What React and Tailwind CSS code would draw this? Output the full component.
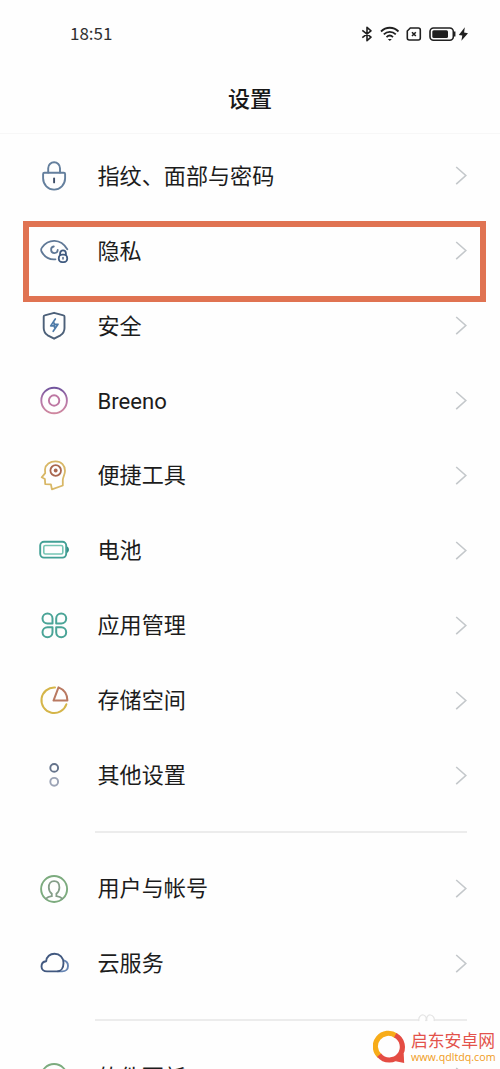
import React from 'react';

function LockIcon() {
  return (
    <svg className="w-8 h-8" viewBox="0 0 32 32" fill="none" stroke="#647f9d" strokeWidth="1.9" strokeLinecap="round">
      <path d="M10.2 12.5V8.2a5.9 5.9 0 0 1 11.8 0v4.3" />
      <path d="M6.4 12.8h19.4a1.3 1.3 0 0 1 1.3 1.3v4.2a11 11.3 0 0 1-22 0v-4.2a1.3 1.3 0 0 1 1.3-1.3z" />
      <path d="M16.1 18.4v4" stroke="#3c4c66" />
    </svg>
  );
}

function EyeIcon() {
  return (
    <svg className="w-8 h-8" viewBox="0 0 32 32" fill="none" stroke="#5f7896" strokeWidth="1.8" strokeLinecap="round">
      <path d="M17.5 24.3C10 25 5.4 20 3.5 16.5 2.9 15 2.9 13.9 4 12.5 10.5 3.7 22.5 3.2 29.3 14.2" />
      <path d="M15.800 11.500a3.300 3.300 0 1 0 3.900 3.500" />
      <path d="M22.100 20v-1.700a2.900 2.900 0 0 1 5.800 0V20" stroke="#405b80" />
      <rect x="20.8" y="19.6" width="8.4" height="7.6" rx="3.3" stroke="#405b80" />
      <path d="M25 22.5v1.5" stroke="#405b80" strokeWidth="1.4" />
    </svg>
  );
}

function ShieldIcon() {
  return (
    <svg className="w-8 h-8" viewBox="0 0 32 32" fill="none" strokeWidth="1.9" strokeLinejoin="round" strokeLinecap="round">
      <path d="M16.1 2.800 25.500 5.300a1.300 1.300 0 0 1 1 1.300v11.500c0 3.500-1.400 5.500-4 7.200l-6.400 3.400-6.400-3.400c-2.600-1.700-4-3.700-4-7.200V6.600a1.300 1.300 0 0 1 1-1.300z" stroke="#4c6079" />
      <path d="M17.3 9 12.700 15.900h3.500V13.200M15.200 21.300l4.800-7h-3.500v3" stroke="#4d7aa8" strokeWidth="1.7" />
    </svg>
  );
}

function BreenoIcon() {
  return (
    <svg className="w-8 h-8" viewBox="0 0 32 32" fill="none" strokeWidth="1.9">
      <defs>
        <linearGradient id="breeno" x1="0" y1="0" x2="0" y2="1">
          <stop offset="0" stopColor="#71549d" />
          <stop offset="0.5" stopColor="#b477a9" />
          <stop offset="1" stopColor="#cf879f" />
        </linearGradient>
      </defs>
      <circle cx="16.1" cy="15.5" r="12.8" stroke="url(#breeno)" />
      <circle cx="16.1" cy="15.5" r="5.2" stroke="#bd76a2" />
    </svg>
  );
}

function HeadIcon() {
  return (
    <svg className="w-8 h-8 -mt-px" viewBox="0 0 32 32" fill="none" strokeWidth="1.8" strokeLinejoin="round">
      <path d="M7 9.500C7.500 4.500 12 1.400 17.500 1.400c6 0 9.500 4.100 9.500 9.300 0 4.300-2.200 6.300-2.200 9.300v5.500L13.900 29.300 12.900 24.400l-5.700-.3-.3-5.100-3.200-1.700L7.200 13.200z" stroke="#d8b766" />
      <circle cx="17.7" cy="10.5" r="5.3" stroke="#a9674f" />
      <circle cx="17.7" cy="10.5" r="1.9" fill="#a9674f" />
    </svg>
  );
}

function BatteryIcon() {
  return (
    <svg className="w-8 h-8 -mt-px" viewBox="0 0 32 32" fill="none">
      <rect x="2.2" y="7.8" width="26" height="15.8" rx="3.8" stroke="#42a095" strokeWidth="1.9" />
      <rect x="5.8" y="11.5" width="19" height="8.5" rx="1.6" stroke="#76c5b4" strokeWidth="1.6" />
      <path d="M29 12.600c2.600 1 2.600 5.300 0 6.300z" fill="#348e85" />
    </svg>
  );
}

function AppsIcon() {
  return (
    <svg className="w-8 h-8 -mt-[2px]" viewBox="0 0 32 32" fill="none" stroke="#4aa497" strokeWidth="2" strokeLinejoin="round">
      <path d="M14.500 14.500H9.500a5 5 0 1 1 5-5z" />
      <path d="M18.200 14.500h5a5 5 0 1 0-5-5z" />
      <path d="M14.500 18.200H9.500a5 5 0 1 0 5 5z" />
      <path d="M18.200 18.200h5a5 5 0 1 1-5 5z" />
    </svg>
  );
}

function StorageIcon() {
  return (
    <svg className="w-8 h-8 -mt-px" viewBox="0 0 32 32" fill="none" strokeWidth="2" strokeLinejoin="round" strokeLinecap="round">
      <path d="M17 3.500A12.800 12.800 0 1 0 28.400 20.300" stroke="#d5b549" />
      <path d="M20.500 3.400 15.500 16.600H29.400C29.400 10 25.800 5.500 20.500 3.400z" stroke="#b97961" />
    </svg>
  );
}

function DotsIcon() {
  return (
    <svg className="w-8 h-8 -mt-px" viewBox="0 0 32 32" fill="none" strokeWidth="1.9">
      <circle cx="16.2" cy="8.9" r="3.9" stroke="#64738b" />
      <circle cx="16.2" cy="22.8" r="3.9" stroke="#9ba3b5" />
    </svg>
  );
}

function UserIcon() {
  return (
    <svg className="w-8 h-8" viewBox="0 0 32 32" fill="none" strokeWidth="1.9" strokeLinecap="round">
      <circle cx="16.1" cy="16" r="13" stroke="#7cab7e" />
      <path d="M8 25.700c1.500-1.800 3.600-2.300 5.800-2.500v-2.500c-2-1.700-3-3.700-3-6.300 0-4 2-6.300 5.300-6.300s5.300 2.300 5.300 6.300c0 2.600-1 4.600-3 6.300v2.500c2.200.2 4.300.7 5.800 2.500" stroke="#849d88" strokeWidth="1.8" />
    </svg>
  );
}

function CloudIcon() {
  return (
    <svg className="w-8 h-8" viewBox="0 0 32 32" fill="none" strokeWidth="1.9" strokeLinecap="round" strokeLinejoin="round">
      <path d="M25.800 12.400c2.500.7 4.200 2.900 4.200 5.500 0 3.200-2.300 5.500-5.800 5.500H20" stroke="#6685b3" />
      <path d="M9 23.400c-3.200 0-5.500-2.100-5.500-5s2-4.900 4.700-5.200C8.500 8.800 12 5.700 16.500 5.700c5.300 0 9 3.900 9 9.200 0 4.800-2.500 8.500-6.500 8.500z" stroke="#41587f" />
    </svg>
  );
}

function UpdateIcon() {
  return (
    <svg className="w-8 h-8" viewBox="0 0 32 32" fill="none" stroke="#7cab7e" strokeWidth="1.9">
      <circle cx="16.1" cy="16" r="13" />
    </svg>
  );
}

const groups = [
  [
    { label: '指纹、面部与密码', Icon: LockIcon },
    { label: '隐私', Icon: EyeIcon, highlighted: true },
    { label: '安全', Icon: ShieldIcon },
    { label: 'Breeno', Icon: BreenoIcon },
    { label: '便捷工具', Icon: HeadIcon },
    { label: '电池', Icon: BatteryIcon },
    { label: '应用管理', Icon: AppsIcon },
    { label: '存储空间', Icon: StorageIcon },
    { label: '其他设置', Icon: DotsIcon },
  ],
  [
    { label: '用户与帐号', Icon: UserIcon },
    { label: '云服务', Icon: CloudIcon },
  ],
  [{ label: '软件更新', Icon: UpdateIcon }],
];

function StatusBar() {
  return (
    <div className="h-[67px] pl-[70px] pr-[31px] flex items-center justify-between">
      <span className="pb-[2px] font-['Noto_Sans_CJK_SC',sans-serif] text-[17px] leading-none text-[#303030]">18:51</span>
      <div className="flex items-center text-[#202020]">
        <svg className="w-3 h-4 mr-[7px]" viewBox="0 0 12 16" fill="none" stroke="currentColor" strokeWidth="1.6" strokeLinejoin="round">
          <path d="M1.300 4.300 10 11.200 6 14.700V1.300L10 4.800 1.300 11.700" />
        </svg>
        <svg className="w-5 h-4 mr-[6px]" viewBox="0 0 20 16" fill="none" stroke="currentColor" strokeWidth="1.8">
          <path d="M1 5.500c5-5 12.500-5 17.500 0M3.800 8.400c3.500-3.500 8.500-3.500 12 0M6.500 11.200c2-2 4.500-2 6.500 0" />
          <path d="M7.800 12.900h4l-2 2.200z" fill="currentColor" stroke="none" />
        </svg>
        <svg className="w-4 h-4 mr-[7px]" viewBox="0 0 16 16" fill="none" stroke="currentColor" strokeWidth="1.6">
          <path d="M4.300 2h8a2 2 0 0 1 2 2v8a2 2 0 0 1-2 2h-9a2 2 0 0 1-2-2V5z" />
          <path d="m6 6.200 3.800 3.800M9.800 6.200 6 10" />
        </svg>
        <svg className="w-7 h-4 mr-[1px]" viewBox="0 0 28 16" fill="none">
          <rect x="1" y="2" width="23.3" height="12.2" rx="3.5" stroke="currentColor" strokeWidth="1.6" />
          <rect x="3.3" y="4.3" width="15.7" height="7.6" rx="1.5" fill="currentColor" />
          <path d="M25.700 5.500v5" stroke="currentColor" strokeWidth="1.5" />
        </svg>
        <svg className="w-[11px] h-4" viewBox="0 0 11 16" fill="currentColor">
          <path d="M6.800 1.300.8 8.900l3.500.6-.9 5.200L10 7.200l-3.900-.7z" />
        </svg>
      </div>
    </div>
  );
}

function SettingRow({ label, Icon, highlighted }) {
  return (
    <div className="relative h-[74.9px] shrink-0 pl-[38px] pr-[32px] flex items-center">
      <Icon />
      <span className="ml-[27.5px] pb-px flex-1 text-[22.1px] leading-none text-[#1c1c1c]">{label}</span>
      <svg className="w-[13px] h-5" viewBox="0 0 13 20" fill="none" stroke="#c4c8cb" strokeWidth="1.6">
        <path d="M1.200 1 10.800 9.500 1.200 18.200" />
      </svg>
      {highlighted && (
        <div className="absolute top-[7px] left-[23px] w-[463px] h-[81px] border-6 border-[#e07352]"></div>
      )}
    </div>
  );
}

function Watermark() {
  return (
    <div className="absolute left-[373px] top-[1030px] flex items-center">
      <svg className="w-[34px] h-[34px]" viewBox="0 0 36 36" fill="none" strokeWidth="5.5">
        <path d="M7 27.500A13.800 13.800 0 0 1 24.500 6.200" stroke="#f7ac19" />
        <path d="M23.500 5.600A13.800 13.800 0 1 1 6.500 26.500" stroke="#e44c43" />
        <path d="M27 28.500 32.500 25 33 35l-9-2z" fill="#e44c43" />
      </svg>
      <div className="ml-[4px] flex flex-col whitespace-nowrap">
        <span className="text-[16.8px] leading-[19px] text-[#e3524b]">启东安卓网</span>
        <span className="font-['Open_Sans',sans-serif] text-[10.7px] leading-[12px] text-[#f09c22]">www.qdltdq.com</span>
      </div>
    </div>
  );
}

export default function App() {
  return (
    <div className="relative w-[500px] h-[1069px] overflow-hidden bg-[#fefefe] font-[Roboto,'Noto_Sans_CJK_SC',sans-serif]">
      <header className="h-[134px] border-b border-[#f7f7f7]">
        <StatusBar />
        <h1 className="h-[63px] pt-[2px] flex items-center justify-center text-[22px] leading-none font-medium text-[#181818]">设置</h1>
      </header>

      <main className="pt-[5px] flex flex-col">
        {groups.map((items, index) => (
          <section key={index}>
            {index > 0 && <div className="ml-[95px] mr-[33px] mt-[18px] mb-[19px] h-[1.5px] bg-[#ececec]"></div>}
            {items.map((item) => (
              <SettingRow key={item.label} {...item} />
            ))}
          </section>
        ))}
      </main>

      {/* faint paw mark above the site logo */}
      <svg className="absolute left-[417px] top-[1012px] w-5 h-3" viewBox="0 0 20 12" fill="#fefefe" stroke="#e4e4e4" strokeWidth="1.2">
        <path d="M2 9C1 5 4 2.500 6.500 3S10 7 8.500 9M10 9c-1-4 1-6.500 3.500-6S18 6 17 9" />
      </svg>
      <Watermark />
    </div>
  );
}
